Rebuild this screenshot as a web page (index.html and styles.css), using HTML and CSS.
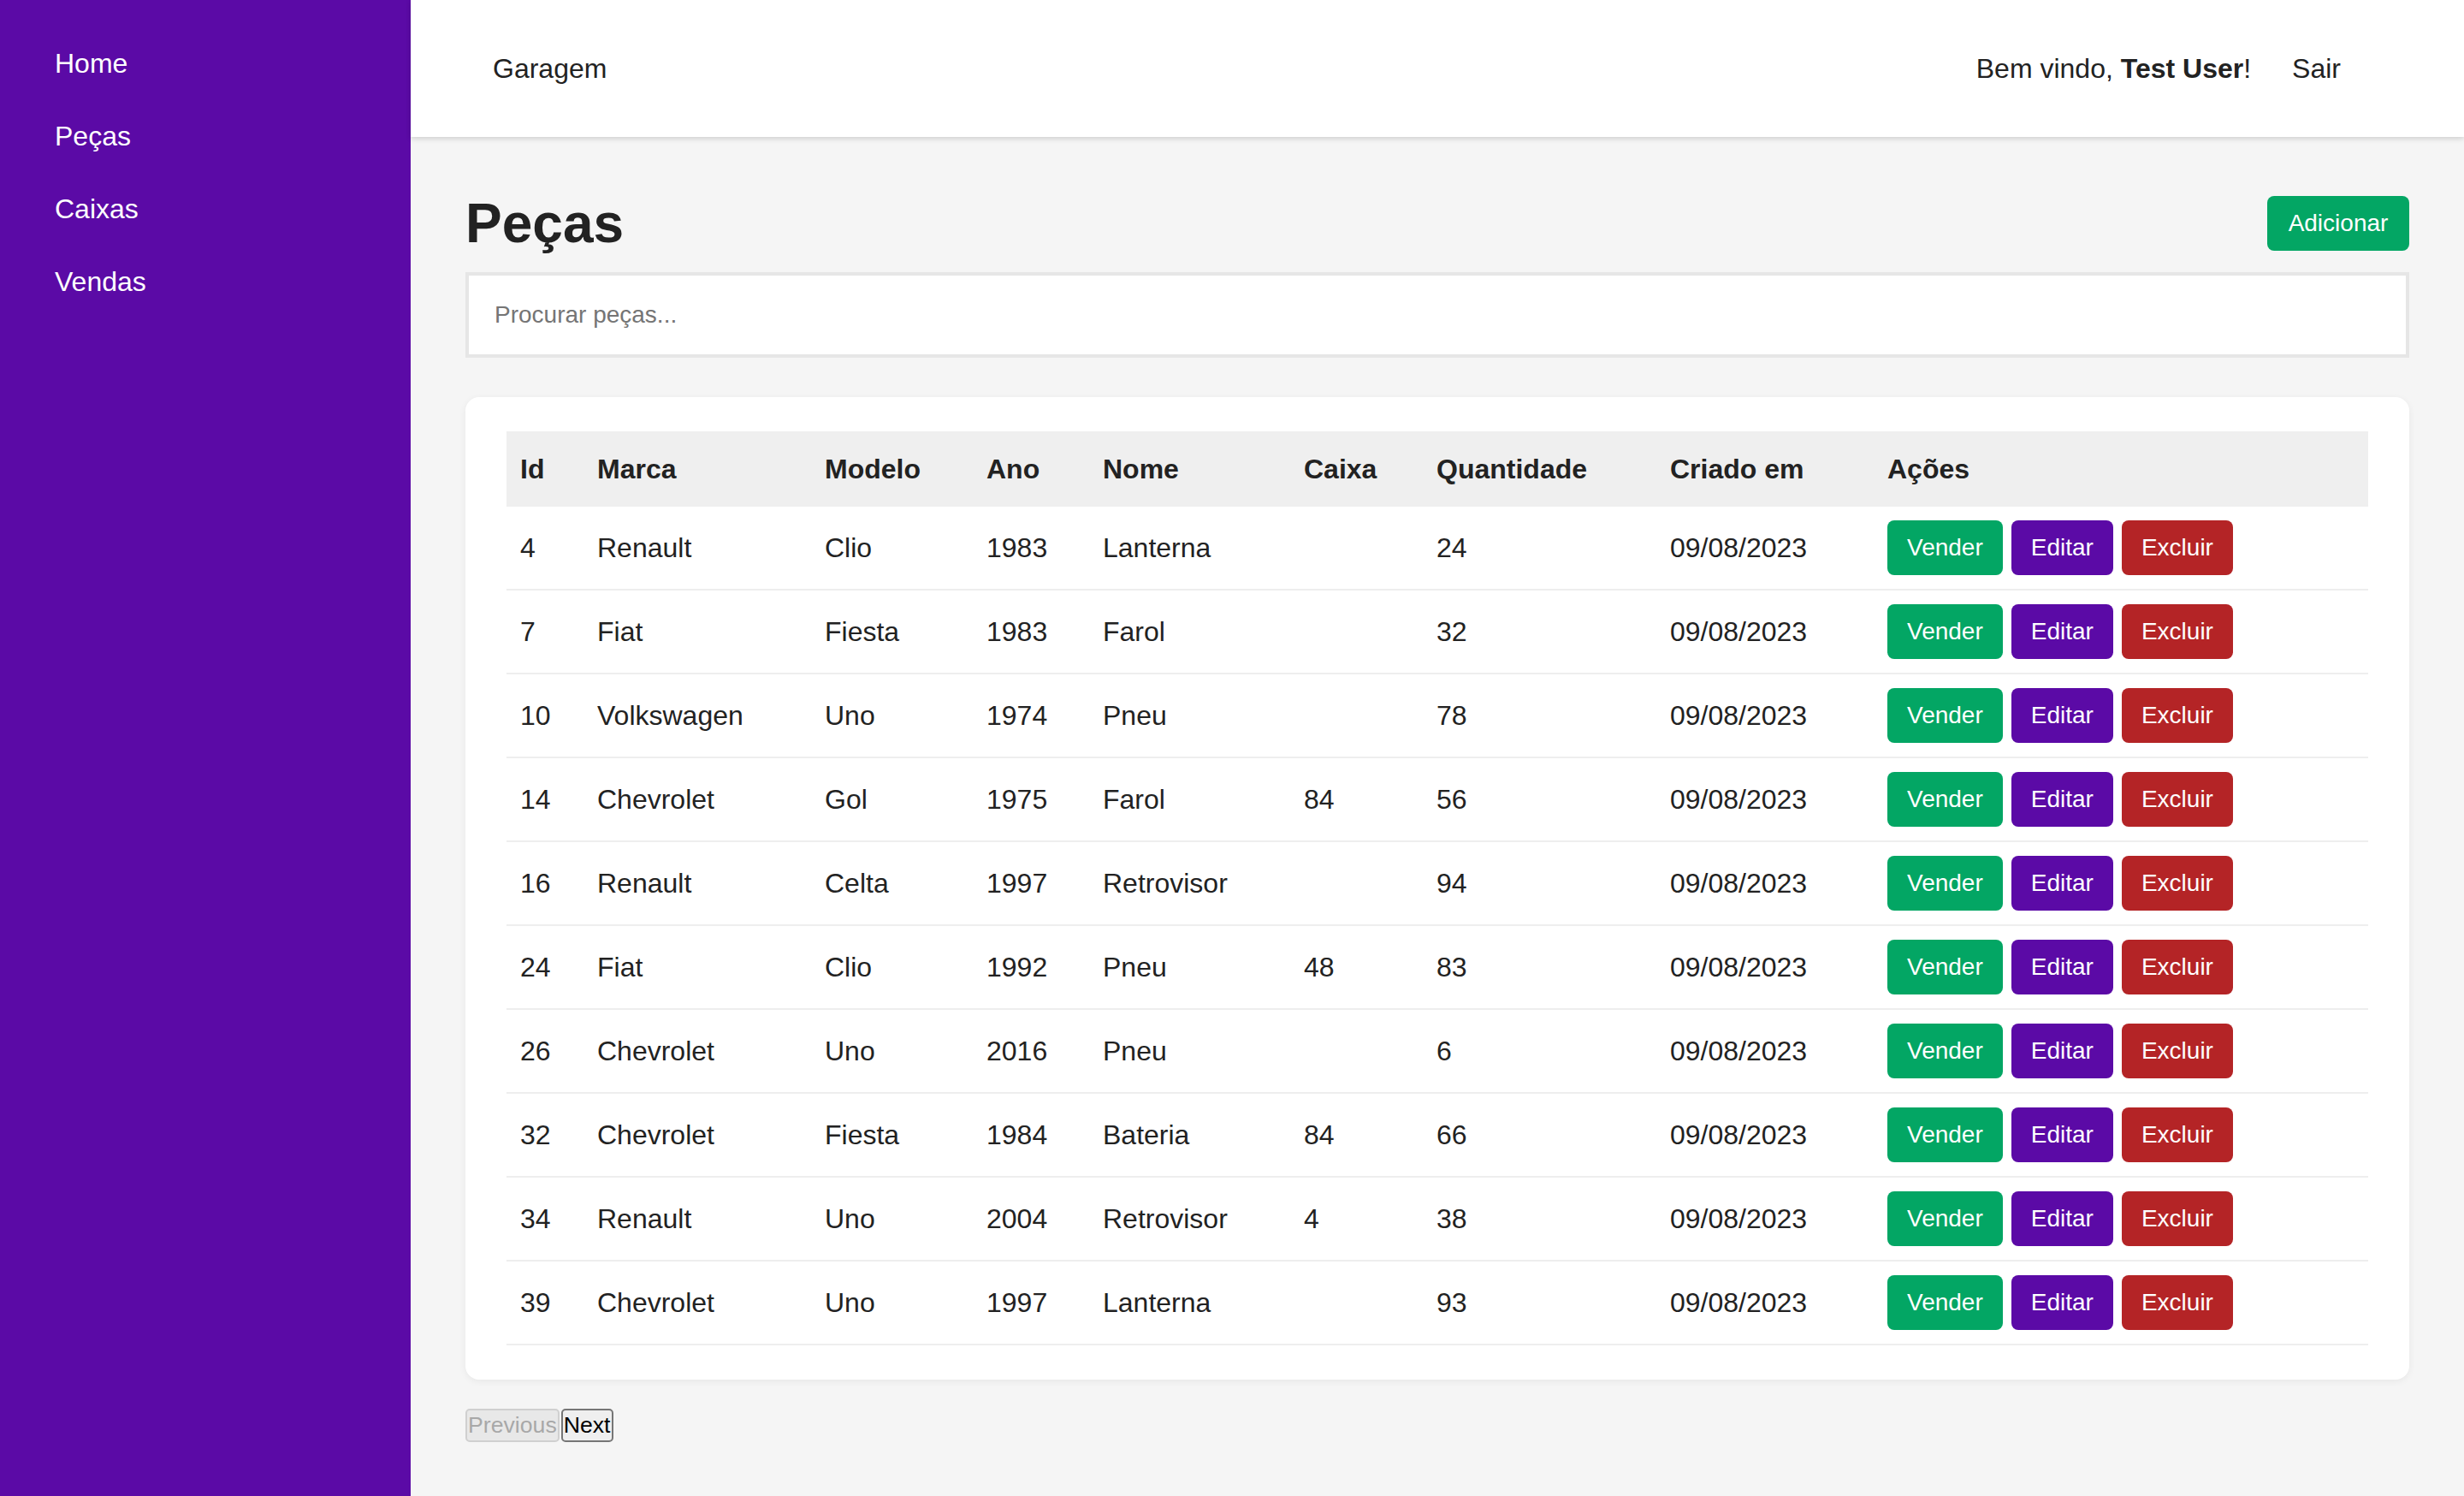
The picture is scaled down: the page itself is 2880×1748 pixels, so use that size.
FILE: index.html
```html
<!DOCTYPE html>
<html lang="pt-BR">
<head>
<meta charset="utf-8">
<title>Peças - Garagem</title>
<link rel="stylesheet" href="styles.css">
</head>
<body>
<aside class="sidebar">
  <nav class="side-nav">
    <a class="side-link" href="#">Home</a>
    <a class="side-link" href="#">Peças</a>
    <a class="side-link" href="#">Caixas</a>
    <a class="side-link" href="#">Vendas</a>
  </nav>
</aside>
<div class="main">
  <header class="topbar">
    <span class="brand">Garagem</span>
    <div class="user-area">
      <span class="welcome">Bem vindo, <strong>Test User</strong>!</span>
      <a class="logout" href="#">Sair</a>
    </div>
  </header>
  <section class="content">
    <div class="title-row">
      <h1 class="page-title">Peças</h1>
      <button class="btn btn-green btn-add">Adicionar</button>
    </div>
    <input class="search" type="text" placeholder="Procurar peças...">
    <div class="card">
      <table class="grid">
        <colgroup>
          <col class="c-id"><col class="c-marca"><col class="c-modelo"><col class="c-ano"><col class="c-nome"><col class="c-caixa"><col class="c-qtd"><col class="c-criado"><col class="c-acoes">
        </colgroup>
        <thead>
          <tr><th>Id</th><th>Marca</th><th>Modelo</th><th>Ano</th><th>Nome</th><th>Caixa</th><th>Quantidade</th><th>Criado em</th><th>Ações</th></tr>
        </thead>
        <tbody>
          <tr><td>4</td><td>Renault</td><td>Clio</td><td>1983</td><td>Lanterna</td><td></td><td>24</td><td>09/08/2023</td><td><div class="actions"><button class="btn btn-green">Vender</button><button class="btn btn-purple">Editar</button><button class="btn btn-red">Excluir</button></div></td></tr>
          <tr><td>7</td><td>Fiat</td><td>Fiesta</td><td>1983</td><td>Farol</td><td></td><td>32</td><td>09/08/2023</td><td><div class="actions"><button class="btn btn-green">Vender</button><button class="btn btn-purple">Editar</button><button class="btn btn-red">Excluir</button></div></td></tr>
          <tr><td>10</td><td>Volkswagen</td><td>Uno</td><td>1974</td><td>Pneu</td><td></td><td>78</td><td>09/08/2023</td><td><div class="actions"><button class="btn btn-green">Vender</button><button class="btn btn-purple">Editar</button><button class="btn btn-red">Excluir</button></div></td></tr>
          <tr><td>14</td><td>Chevrolet</td><td>Gol</td><td>1975</td><td>Farol</td><td>84</td><td>56</td><td>09/08/2023</td><td><div class="actions"><button class="btn btn-green">Vender</button><button class="btn btn-purple">Editar</button><button class="btn btn-red">Excluir</button></div></td></tr>
          <tr><td>16</td><td>Renault</td><td>Celta</td><td>1997</td><td>Retrovisor</td><td></td><td>94</td><td>09/08/2023</td><td><div class="actions"><button class="btn btn-green">Vender</button><button class="btn btn-purple">Editar</button><button class="btn btn-red">Excluir</button></div></td></tr>
          <tr><td>24</td><td>Fiat</td><td>Clio</td><td>1992</td><td>Pneu</td><td>48</td><td>83</td><td>09/08/2023</td><td><div class="actions"><button class="btn btn-green">Vender</button><button class="btn btn-purple">Editar</button><button class="btn btn-red">Excluir</button></div></td></tr>
          <tr><td>26</td><td>Chevrolet</td><td>Uno</td><td>2016</td><td>Pneu</td><td></td><td>6</td><td>09/08/2023</td><td><div class="actions"><button class="btn btn-green">Vender</button><button class="btn btn-purple">Editar</button><button class="btn btn-red">Excluir</button></div></td></tr>
          <tr><td>32</td><td>Chevrolet</td><td>Fiesta</td><td>1984</td><td>Bateria</td><td>84</td><td>66</td><td>09/08/2023</td><td><div class="actions"><button class="btn btn-green">Vender</button><button class="btn btn-purple">Editar</button><button class="btn btn-red">Excluir</button></div></td></tr>
          <tr><td>34</td><td>Renault</td><td>Uno</td><td>2004</td><td>Retrovisor</td><td>4</td><td>38</td><td>09/08/2023</td><td><div class="actions"><button class="btn btn-green">Vender</button><button class="btn btn-purple">Editar</button><button class="btn btn-red">Excluir</button></div></td></tr>
          <tr><td>39</td><td>Chevrolet</td><td>Uno</td><td>1997</td><td>Lanterna</td><td></td><td>93</td><td>09/08/2023</td><td><div class="actions"><button class="btn btn-green">Vender</button><button class="btn btn-purple">Editar</button><button class="btn btn-red">Excluir</button></div></td></tr>
        </tbody>
      </table>
    </div>
    <div class="pager">
      <button class="page-btn page-prev" disabled>Previous</button><button class="page-btn page-next">Next</button>
    </div>
  </section>
</div>
</body>
</html>
```

FILE: styles.css
```css
* { box-sizing: border-box; }

html, body {
  margin: 0;
  padding: 0;
}

body {
  display: flex;
  min-height: 100vh;
  font-family: "Liberation Sans", Arial, sans-serif;
  color: #222;
  background: #f5f5f5;
}

.sidebar {
  width: 480px;
  flex-shrink: 0;
  background: #5b0aa6;
  min-height: 100vh;
}

.side-nav {
  display: flex;
  flex-direction: column;
  padding-top: 32px;
}

.side-link {
  display: block;
  padding: 24px 64px;
  line-height: 37px;
  font-size: 32px;
  color: #fff;
  text-decoration: none;
}

.main {
  flex: 1;
  display: flex;
  flex-direction: column;
  min-width: 0;
}

.topbar {
  height: 160px;
  background: #fff;
  display: flex;
  align-items: center;
  justify-content: space-between;
  padding: 0 96px;
  box-shadow: 0 2px 6px rgba(0, 0, 0, 0.16);
  position: relative;
  z-index: 1;
  font-size: 32px;
  color: #222;
}

.user-area {
  display: flex;
  align-items: center;
}

.welcome strong { font-weight: bold; }

.logout {
  padding: 0 48px;
  color: #222;
  text-decoration: none;
}

.content {
  padding: 64px;
  display: flex;
  flex-direction: column;
}

.title-row {
  display: flex;
  align-items: center;
  justify-content: space-between;
}

.page-title {
  margin: 0;
  font-size: 64px;
  line-height: 74px;
  font-weight: bold;
  color: #222;
}

.btn {
  font-family: "Liberation Sans", Arial, sans-serif;
  font-size: 28px;
  height: 64px;
  padding: 0 23px;
  border: none;
  border-radius: 8px;
  color: #fff;
  cursor: pointer;
}

.btn-green { background: #03a664; }
.btn-purple { background: #5b0aa6; }
.btn-red { background: #b42426; }

.btn-add { width: 166px; padding: 0; }

.search {
  margin-top: 20px;
  height: 100px;
  width: 100%;
  border: 4px solid #e6e6e6;
  background: #fff;
  padding: 0 30px;
  font-family: "Liberation Sans", Arial, sans-serif;
  font-size: 28px;
  color: #222;
  outline: none;
}

.search::placeholder { color: #757575; }

.card {
  margin-top: 46px;
  background: #fff;
  border-radius: 16px;
  padding: 40px 48px;
  box-shadow: 0 2px 8px rgba(0, 0, 0, 0.06);
}

.grid {
  width: 100%;
  border-collapse: collapse;
  table-layout: fixed;
  font-size: 32px;
  color: #222;
}

.c-id { width: 90px; }
.c-marca { width: 266px; }
.c-modelo { width: 189px; }
.c-ano { width: 136px; }
.c-nome { width: 235px; }
.c-caixa { width: 155px; }
.c-qtd { width: 273px; }
.c-criado { width: 254px; }

.grid th {
  height: 88px;
  background: #efefef;
  text-align: left;
  font-weight: bold;
  padding: 0 16px;
}

.grid td {
  padding: 16px;
  border-bottom: 2px solid #eeeeee;
  vertical-align: middle;
  height: 96px;
}

.actions {
  display: flex;
  gap: 10px;
}

.pager {
  margin-top: 34px;
  display: flex;
  gap: 2px;
}

.page-btn {
  font-family: "Liberation Sans", Arial, sans-serif;
  font-size: 26.67px;
  padding: 2px 1px;
  border-radius: 5px;
  border: 2px solid #767676;
  background: #efefef;
  color: #000;
}

.page-prev {
  border-color: #d0d0d0;
  background: #e8e8e8;
  color: #a8a8a8;
}
```
